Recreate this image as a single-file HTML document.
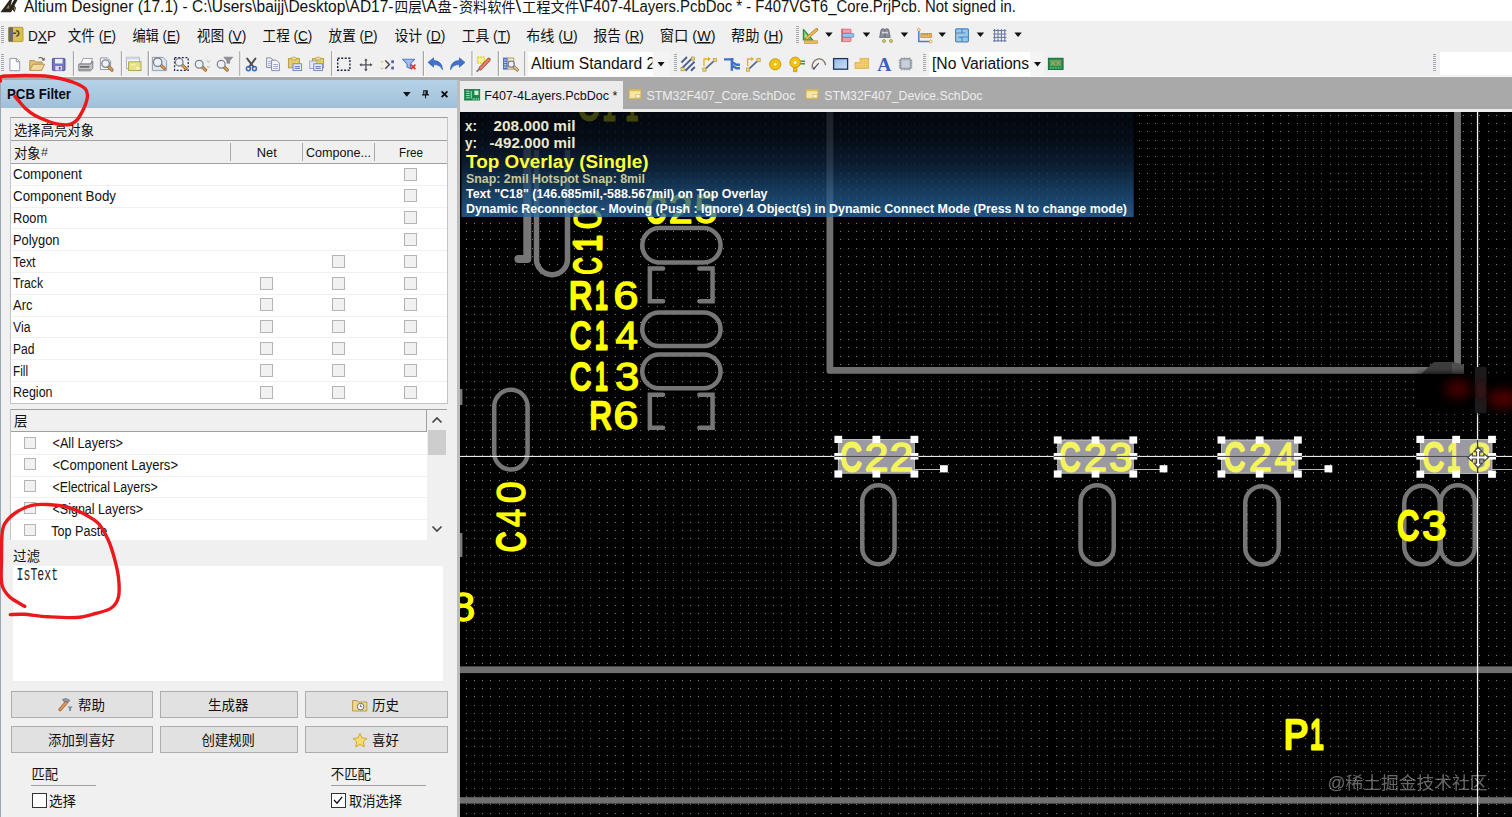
<!DOCTYPE html>
<html lang="zh"><head><meta charset="utf-8"><title>Altium Designer (17.1)</title>
<style>
html,body{margin:0;padding:0;background:#fff;overflow:hidden}
body{width:1512px;height:817px;position:relative;font-family:"Liberation Sans","Noto Sans CJK SC",sans-serif;font-size:14px;color:#000}
.abs{position:absolute}
svg{position:absolute;left:0;top:0;overflow:hidden}
svg text{font-family:"Liberation Sans","Noto Sans CJK SC",sans-serif;white-space:pre}
#titlebar{left:0;top:0;width:1512px;height:21px;background:#fff}
#menubar{left:0;top:21px;width:1512px;height:57px;background:#f0f0f0}
#tabbar{left:0;top:77.4px;width:1512px;height:34.6px;background:#a9a9a9}
#panel{left:0;top:80.3px;width:457px;height:737px;background:#f0f0f0}
#panelhead{left:1px;top:80.3px;width:456.3px;height:27.5px;background:linear-gradient(#b5d2e7,#abc9df 50%,#a1bfd8)}
#pcb{left:460px;top:112px;width:1052px;height:705px;background:#000}
.cb{position:absolute;width:11px;height:11px;border:1px solid #b4b4b4;background:#f1f1f1}
.btn{position:absolute;height:25px;border:1px solid #adadad;background:#e1e1e1}
.rowline{position:absolute;height:1px;background:#f0f0f0}
</style></head><body>

<div id="titlebar" class="abs"></div>
<div id="menubar" class="abs"></div>
<div class="abs" style="left:0;top:76px;width:1512px;height:1.4px;background:#fafafa"></div>
<div id="tabbar" class="abs"></div>
<div class="abs" style="left:460.3px;top:81px;width:162.4px;height:31px;background:#ebebeb"></div>
<div class="abs" style="left:457px;top:108.5px;width:1055px;height:3.5px;background:#ececec"></div>
<div id="panel" class="abs"></div>
<div class="abs" style="left:0;top:80.3px;width:1px;height:737px;background:#9aa6b4"></div>
<div class="abs" style="left:457.3px;top:80.3px;width:2.9px;height:737px;background:#bcbcbc"></div>
<div id="panelhead" class="abs"></div>
<div class="abs" style="left:10px;top:117px;width:436px;height:285px;border:1px solid #c4c4c4;border-top-color:#a0a0a0;background:#fff;box-sizing:content-box"></div>
<div class="abs" style="left:11px;top:118px;width:436px;height:22px;background:#f0f0f0;border-bottom:1px solid #a0a0a0"></div>
<div class="abs" style="left:11px;top:141px;width:436px;height:22px;background:#f0f0f0;border-bottom:1px solid #a0a0a0"></div>
<div class="abs" style="left:230px;top:143px;width:1px;height:18px;background:#a8a8a8"></div>
<div class="abs" style="left:302px;top:143px;width:1px;height:18px;background:#a8a8a8"></div>
<div class="abs" style="left:374px;top:143px;width:1px;height:18px;background:#a8a8a8"></div>
<div class="cb" style="left:404px;top:167.5px"></div>
<div class="rowline" style="left:11px;top:184.8px;width:436px"></div>
<div class="cb" style="left:404px;top:189.3px"></div>
<div class="rowline" style="left:11px;top:206.6px;width:436px"></div>
<div class="cb" style="left:404px;top:211.1px"></div>
<div class="rowline" style="left:11px;top:228.4px;width:436px"></div>
<div class="cb" style="left:404px;top:232.9px"></div>
<div class="rowline" style="left:11px;top:250.2px;width:436px"></div>
<div class="cb" style="left:404px;top:254.7px"></div>
<div class="cb" style="left:332px;top:254.7px"></div>
<div class="rowline" style="left:11px;top:272.0px;width:436px"></div>
<div class="cb" style="left:404px;top:276.5px"></div>
<div class="cb" style="left:332px;top:276.5px"></div>
<div class="cb" style="left:260px;top:276.5px"></div>
<div class="rowline" style="left:11px;top:293.8px;width:436px"></div>
<div class="cb" style="left:404px;top:298.3px"></div>
<div class="cb" style="left:332px;top:298.3px"></div>
<div class="cb" style="left:260px;top:298.3px"></div>
<div class="rowline" style="left:11px;top:315.6px;width:436px"></div>
<div class="cb" style="left:404px;top:320.1px"></div>
<div class="cb" style="left:332px;top:320.1px"></div>
<div class="cb" style="left:260px;top:320.1px"></div>
<div class="rowline" style="left:11px;top:337.4px;width:436px"></div>
<div class="cb" style="left:404px;top:341.9px"></div>
<div class="cb" style="left:332px;top:341.9px"></div>
<div class="cb" style="left:260px;top:341.9px"></div>
<div class="rowline" style="left:11px;top:359.2px;width:436px"></div>
<div class="cb" style="left:404px;top:363.7px"></div>
<div class="cb" style="left:332px;top:363.7px"></div>
<div class="cb" style="left:260px;top:363.7px"></div>
<div class="rowline" style="left:11px;top:381.0px;width:436px"></div>
<div class="cb" style="left:404px;top:385.5px"></div>
<div class="cb" style="left:332px;top:385.5px"></div>
<div class="cb" style="left:260px;top:385.5px"></div>
<div class="abs" style="left:10px;top:409px;width:436px;height:130px;border:1px solid #c4c4c4;border-top-color:#a0a0a0;border-bottom:none;border-right:none;background:#fff"></div>
<div class="abs" style="left:11px;top:410px;width:416px;height:21px;background:#f0f0f0;border-bottom:1px solid #a0a0a0"></div>
<div class="abs" style="left:427px;top:410px;width:20px;height:130px;background:#f0f0f0"></div>
<div class="abs" style="left:426px;top:410px;width:1px;height:22px;background:#a0a0a0"></div>
<div class="abs" style="left:428px;top:430px;width:18px;height:25px;background:#cdcdcd"></div>
<div class="cb" style="left:24px;top:436.5px;width:10px;height:10px"></div>
<div class="rowline" style="left:11px;top:453.8px;width:416px"></div>
<div class="cb" style="left:24px;top:458.3px;width:10px;height:10px"></div>
<div class="rowline" style="left:11px;top:475.6px;width:416px"></div>
<div class="cb" style="left:24px;top:480.1px;width:10px;height:10px"></div>
<div class="rowline" style="left:11px;top:497.4px;width:416px"></div>
<div class="cb" style="left:24px;top:501.9px;width:10px;height:10px"></div>
<div class="rowline" style="left:11px;top:519.2px;width:416px"></div>
<div class="cb" style="left:24px;top:523.7px;width:10px;height:10px"></div>
<div class="abs" style="left:13px;top:566px;width:430px;height:115px;background:#fff"></div>
<div class="btn" style="left:11px;top:691px;width:140px"></div>
<div class="btn" style="left:11px;top:726px;width:140px"></div>
<div class="btn" style="left:160px;top:691px;width:136px"></div>
<div class="btn" style="left:160px;top:726px;width:136px"></div>
<div class="btn" style="left:305px;top:691px;width:141px"></div>
<div class="btn" style="left:305px;top:726px;width:141px"></div>
<div class="abs" style="left:31px;top:785px;width:65px;height:1px;background:#a0a0a0"></div>
<div class="abs" style="left:331px;top:785px;width:95px;height:1px;background:#a0a0a0"></div>
<div class="abs" style="left:32px;top:793px;width:13px;height:13px;border:1px solid #333;background:#fff"></div>
<div class="abs" style="left:331px;top:793px;width:13px;height:13px;border:1px solid #333;background:#fff"></div>
<div class="abs" style="left:528px;top:52px;width:125px;height:24px;background:#fff"></div>
<div class="abs" style="left:653px;top:52px;width:16px;height:24px;background:#f4f4f4"></div>
<div class="abs" style="left:929px;top:52px;width:101px;height:24px;background:#fff"></div>
<div class="abs" style="left:1030px;top:52px;width:14px;height:24px;background:#f4f4f4"></div>
<div class="abs" style="left:1440px;top:52px;width:72px;height:23px;background:#fff"></div>
<div id="pcb" class="abs"></div>
<svg width="1512" height="817" viewBox="0 0 1512 817">
<defs>
<pattern id="vl" x="0" y="0" width="831" height="1" patternUnits="userSpaceOnUse"><rect x="0" y="0" width="1" height="1" fill="#fff"/><rect x="9" y="0" width="1" height="1" fill="#fff"/><rect x="17" y="0" width="1" height="1" fill="#fff"/><rect x="25" y="0" width="1" height="1" fill="#fff"/><rect x="33" y="0" width="1" height="1" fill="#fff"/><rect x="42" y="0" width="1" height="1" fill="#fff"/><rect x="50" y="0" width="1" height="1" fill="#fff"/><rect x="58" y="0" width="1" height="1" fill="#fff"/><rect x="67" y="0" width="1" height="1" fill="#fff"/><rect x="75" y="0" width="1" height="1" fill="#fff"/><rect x="83" y="0" width="1" height="1" fill="#fff"/><rect x="92" y="0" width="1" height="1" fill="#fff"/><rect x="100" y="0" width="1" height="1" fill="#fff"/><rect x="108" y="0" width="1" height="1" fill="#fff"/><rect x="117" y="0" width="1" height="1" fill="#fff"/><rect x="125" y="0" width="1" height="1" fill="#fff"/><rect x="133" y="0" width="1" height="1" fill="#fff"/><rect x="141" y="0" width="1" height="1" fill="#fff"/><rect x="150" y="0" width="1" height="1" fill="#fff"/><rect x="158" y="0" width="1" height="1" fill="#fff"/><rect x="166" y="0" width="1" height="1" fill="#fff"/><rect x="175" y="0" width="1" height="1" fill="#fff"/><rect x="183" y="0" width="1" height="1" fill="#fff"/><rect x="191" y="0" width="1" height="1" fill="#fff"/><rect x="200" y="0" width="1" height="1" fill="#fff"/><rect x="208" y="0" width="1" height="1" fill="#fff"/><rect x="216" y="0" width="1" height="1" fill="#fff"/><rect x="225" y="0" width="1" height="1" fill="#fff"/><rect x="233" y="0" width="1" height="1" fill="#fff"/><rect x="241" y="0" width="1" height="1" fill="#fff"/><rect x="250" y="0" width="1" height="1" fill="#fff"/><rect x="258" y="0" width="1" height="1" fill="#fff"/><rect x="266" y="0" width="1" height="1" fill="#fff"/><rect x="274" y="0" width="1" height="1" fill="#fff"/><rect x="283" y="0" width="1" height="1" fill="#fff"/><rect x="291" y="0" width="1" height="1" fill="#fff"/><rect x="299" y="0" width="1" height="1" fill="#fff"/><rect x="308" y="0" width="1" height="1" fill="#fff"/><rect x="316" y="0" width="1" height="1" fill="#fff"/><rect x="324" y="0" width="1" height="1" fill="#fff"/><rect x="333" y="0" width="1" height="1" fill="#fff"/><rect x="341" y="0" width="1" height="1" fill="#fff"/><rect x="349" y="0" width="1" height="1" fill="#fff"/><rect x="358" y="0" width="1" height="1" fill="#fff"/><rect x="366" y="0" width="1" height="1" fill="#fff"/><rect x="374" y="0" width="1" height="1" fill="#fff"/><rect x="382" y="0" width="1" height="1" fill="#fff"/><rect x="391" y="0" width="1" height="1" fill="#fff"/><rect x="399" y="0" width="1" height="1" fill="#fff"/><rect x="407" y="0" width="1" height="1" fill="#fff"/><rect x="416" y="0" width="1" height="1" fill="#fff"/><rect x="424" y="0" width="1" height="1" fill="#fff"/><rect x="432" y="0" width="1" height="1" fill="#fff"/><rect x="441" y="0" width="1" height="1" fill="#fff"/><rect x="449" y="0" width="1" height="1" fill="#fff"/><rect x="457" y="0" width="1" height="1" fill="#fff"/><rect x="466" y="0" width="1" height="1" fill="#fff"/><rect x="474" y="0" width="1" height="1" fill="#fff"/><rect x="482" y="0" width="1" height="1" fill="#fff"/><rect x="490" y="0" width="1" height="1" fill="#fff"/><rect x="499" y="0" width="1" height="1" fill="#fff"/><rect x="507" y="0" width="1" height="1" fill="#fff"/><rect x="515" y="0" width="1" height="1" fill="#fff"/><rect x="524" y="0" width="1" height="1" fill="#fff"/><rect x="532" y="0" width="1" height="1" fill="#fff"/><rect x="540" y="0" width="1" height="1" fill="#fff"/><rect x="549" y="0" width="1" height="1" fill="#fff"/><rect x="557" y="0" width="1" height="1" fill="#fff"/><rect x="565" y="0" width="1" height="1" fill="#fff"/><rect x="574" y="0" width="1" height="1" fill="#fff"/><rect x="582" y="0" width="1" height="1" fill="#fff"/><rect x="590" y="0" width="1" height="1" fill="#fff"/><rect x="599" y="0" width="1" height="1" fill="#fff"/><rect x="607" y="0" width="1" height="1" fill="#fff"/><rect x="615" y="0" width="1" height="1" fill="#fff"/><rect x="623" y="0" width="1" height="1" fill="#fff"/><rect x="632" y="0" width="1" height="1" fill="#fff"/><rect x="640" y="0" width="1" height="1" fill="#fff"/><rect x="648" y="0" width="1" height="1" fill="#fff"/><rect x="657" y="0" width="1" height="1" fill="#fff"/><rect x="665" y="0" width="1" height="1" fill="#fff"/><rect x="673" y="0" width="1" height="1" fill="#fff"/><rect x="682" y="0" width="1" height="1" fill="#fff"/><rect x="690" y="0" width="1" height="1" fill="#fff"/><rect x="698" y="0" width="1" height="1" fill="#fff"/><rect x="707" y="0" width="1" height="1" fill="#fff"/><rect x="715" y="0" width="1" height="1" fill="#fff"/><rect x="723" y="0" width="1" height="1" fill="#fff"/><rect x="731" y="0" width="1" height="1" fill="#fff"/><rect x="740" y="0" width="1" height="1" fill="#fff"/><rect x="748" y="0" width="1" height="1" fill="#fff"/><rect x="756" y="0" width="1" height="1" fill="#fff"/><rect x="765" y="0" width="1" height="1" fill="#fff"/><rect x="773" y="0" width="1" height="1" fill="#fff"/><rect x="781" y="0" width="1" height="1" fill="#fff"/><rect x="790" y="0" width="1" height="1" fill="#fff"/><rect x="798" y="0" width="1" height="1" fill="#fff"/><rect x="806" y="0" width="1" height="1" fill="#fff"/><rect x="815" y="0" width="1" height="1" fill="#fff"/><rect x="823" y="0" width="1" height="1" fill="#fff"/></pattern>
<pattern id="hl" x="0" y="0" width="1" height="831" patternUnits="userSpaceOnUse"><rect x="0" y="7" width="1" height="1" fill="#7a7a7a"/><rect x="0" y="15" width="1" height="1" fill="#7a7a7a"/><rect x="0" y="23" width="1" height="1" fill="#7a7a7a"/><rect x="0" y="32" width="1" height="1" fill="#7a7a7a"/><rect x="0" y="40" width="1" height="1" fill="#7a7a7a"/><rect x="0" y="48" width="1" height="1" fill="#7a7a7a"/><rect x="0" y="56" width="1" height="1" fill="#7a7a7a"/><rect x="0" y="65" width="1" height="1" fill="#7a7a7a"/><rect x="0" y="73" width="1" height="1" fill="#7a7a7a"/><rect x="0" y="81" width="1" height="1" fill="#7a7a7a"/><rect x="0" y="90" width="1" height="1" fill="#7a7a7a"/><rect x="0" y="98" width="1" height="1" fill="#7a7a7a"/><rect x="0" y="106" width="1" height="1" fill="#7a7a7a"/><rect x="0" y="115" width="1" height="1" fill="#7a7a7a"/><rect x="0" y="123" width="1" height="1" fill="#7a7a7a"/><rect x="0" y="131" width="1" height="1" fill="#7a7a7a"/><rect x="0" y="140" width="1" height="1" fill="#7a7a7a"/><rect x="0" y="148" width="1" height="1" fill="#7a7a7a"/><rect x="0" y="156" width="1" height="1" fill="#7a7a7a"/><rect x="0" y="164" width="1" height="1" fill="#7a7a7a"/><rect x="0" y="173" width="1" height="1" fill="#7a7a7a"/><rect x="0" y="181" width="1" height="1" fill="#7a7a7a"/><rect x="0" y="189" width="1" height="1" fill="#7a7a7a"/><rect x="0" y="198" width="1" height="1" fill="#7a7a7a"/><rect x="0" y="206" width="1" height="1" fill="#7a7a7a"/><rect x="0" y="214" width="1" height="1" fill="#7a7a7a"/><rect x="0" y="223" width="1" height="1" fill="#7a7a7a"/><rect x="0" y="231" width="1" height="1" fill="#7a7a7a"/><rect x="0" y="239" width="1" height="1" fill="#7a7a7a"/><rect x="0" y="248" width="1" height="1" fill="#7a7a7a"/><rect x="0" y="256" width="1" height="1" fill="#7a7a7a"/><rect x="0" y="264" width="1" height="1" fill="#7a7a7a"/><rect x="0" y="273" width="1" height="1" fill="#7a7a7a"/><rect x="0" y="281" width="1" height="1" fill="#7a7a7a"/><rect x="0" y="289" width="1" height="1" fill="#7a7a7a"/><rect x="0" y="297" width="1" height="1" fill="#7a7a7a"/><rect x="0" y="306" width="1" height="1" fill="#7a7a7a"/><rect x="0" y="314" width="1" height="1" fill="#7a7a7a"/><rect x="0" y="322" width="1" height="1" fill="#7a7a7a"/><rect x="0" y="331" width="1" height="1" fill="#7a7a7a"/><rect x="0" y="339" width="1" height="1" fill="#7a7a7a"/><rect x="0" y="347" width="1" height="1" fill="#7a7a7a"/><rect x="0" y="356" width="1" height="1" fill="#7a7a7a"/><rect x="0" y="364" width="1" height="1" fill="#7a7a7a"/><rect x="0" y="372" width="1" height="1" fill="#7a7a7a"/><rect x="0" y="381" width="1" height="1" fill="#7a7a7a"/><rect x="0" y="389" width="1" height="1" fill="#7a7a7a"/><rect x="0" y="397" width="1" height="1" fill="#7a7a7a"/><rect x="0" y="405" width="1" height="1" fill="#7a7a7a"/><rect x="0" y="414" width="1" height="1" fill="#7a7a7a"/><rect x="0" y="422" width="1" height="1" fill="#7a7a7a"/><rect x="0" y="430" width="1" height="1" fill="#7a7a7a"/><rect x="0" y="439" width="1" height="1" fill="#7a7a7a"/><rect x="0" y="447" width="1" height="1" fill="#7a7a7a"/><rect x="0" y="455" width="1" height="1" fill="#7a7a7a"/><rect x="0" y="464" width="1" height="1" fill="#7a7a7a"/><rect x="0" y="472" width="1" height="1" fill="#7a7a7a"/><rect x="0" y="480" width="1" height="1" fill="#7a7a7a"/><rect x="0" y="489" width="1" height="1" fill="#7a7a7a"/><rect x="0" y="497" width="1" height="1" fill="#7a7a7a"/><rect x="0" y="505" width="1" height="1" fill="#7a7a7a"/><rect x="0" y="514" width="1" height="1" fill="#7a7a7a"/><rect x="0" y="522" width="1" height="1" fill="#7a7a7a"/><rect x="0" y="530" width="1" height="1" fill="#7a7a7a"/><rect x="0" y="538" width="1" height="1" fill="#7a7a7a"/><rect x="0" y="547" width="1" height="1" fill="#7a7a7a"/><rect x="0" y="555" width="1" height="1" fill="#7a7a7a"/><rect x="0" y="563" width="1" height="1" fill="#7a7a7a"/><rect x="0" y="572" width="1" height="1" fill="#7a7a7a"/><rect x="0" y="580" width="1" height="1" fill="#7a7a7a"/><rect x="0" y="588" width="1" height="1" fill="#7a7a7a"/><rect x="0" y="597" width="1" height="1" fill="#7a7a7a"/><rect x="0" y="605" width="1" height="1" fill="#7a7a7a"/><rect x="0" y="613" width="1" height="1" fill="#7a7a7a"/><rect x="0" y="622" width="1" height="1" fill="#7a7a7a"/><rect x="0" y="630" width="1" height="1" fill="#7a7a7a"/><rect x="0" y="638" width="1" height="1" fill="#7a7a7a"/><rect x="0" y="646" width="1" height="1" fill="#7a7a7a"/><rect x="0" y="655" width="1" height="1" fill="#7a7a7a"/><rect x="0" y="663" width="1" height="1" fill="#7a7a7a"/><rect x="0" y="671" width="1" height="1" fill="#7a7a7a"/><rect x="0" y="680" width="1" height="1" fill="#7a7a7a"/><rect x="0" y="688" width="1" height="1" fill="#7a7a7a"/><rect x="0" y="696" width="1" height="1" fill="#7a7a7a"/><rect x="0" y="705" width="1" height="1" fill="#7a7a7a"/><rect x="0" y="713" width="1" height="1" fill="#7a7a7a"/><rect x="0" y="721" width="1" height="1" fill="#7a7a7a"/><rect x="0" y="730" width="1" height="1" fill="#7a7a7a"/><rect x="0" y="738" width="1" height="1" fill="#7a7a7a"/><rect x="0" y="746" width="1" height="1" fill="#7a7a7a"/><rect x="0" y="755" width="1" height="1" fill="#7a7a7a"/><rect x="0" y="763" width="1" height="1" fill="#7a7a7a"/><rect x="0" y="771" width="1" height="1" fill="#7a7a7a"/><rect x="0" y="779" width="1" height="1" fill="#7a7a7a"/><rect x="0" y="788" width="1" height="1" fill="#7a7a7a"/><rect x="0" y="796" width="1" height="1" fill="#7a7a7a"/><rect x="0" y="804" width="1" height="1" fill="#7a7a7a"/><rect x="0" y="813" width="1" height="1" fill="#7a7a7a"/><rect x="0" y="821" width="1" height="1" fill="#7a7a7a"/><rect x="0" y="829" width="1" height="1" fill="#7a7a7a"/></pattern>
<mask id="vm" maskUnits="userSpaceOnUse" x="460" y="112" width="1052" height="705"><rect x="460" y="112" width="1052" height="705" fill="url(#vl)"/></mask>
<clipPath id="pcbclip"><rect x="460" y="112" width="1052" height="705"/></clipPath>
<linearGradient id="ovl" x1="0" y1="0" x2="0" y2="1"><stop offset="0" stop-color="#040911" stop-opacity="0.77"/><stop offset="0.25" stop-color="#07101d" stop-opacity="0.77"/><stop offset="0.5" stop-color="#0e253f" stop-opacity="0.77"/><stop offset="0.75" stop-color="#1d4c79" stop-opacity="0.77"/><stop offset="1" stop-color="#2a6ca6" stop-opacity="0.77"/></linearGradient>
<filter id="blur6" x="-100%" y="-100%" width="300%" height="300%"><feGaussianBlur stdDeviation="6"/></filter>
<filter id="blur3" x="-100%" y="-100%" width="300%" height="300%"><feGaussianBlur stdDeviation="3"/></filter>
</defs>
<g clip-path="url(#pcbclip)">
<rect x="460" y="112" width="1052" height="705" fill="url(#hl)" mask="url(#vm)"/>
<path d="M829.9 100 V370.4 H1457.5 V100" fill="none" stroke="#6f6f6f" stroke-width="6.8" stroke-linejoin="round"/>
<rect x="460" y="666.4" width="1052" height="6.7" fill="#6f6f6f"/>
<rect x="460" y="797.2" width="1052" height="6.4" fill="#707070"/>
<rect x="460" y="389" width="2.4" height="16" fill="#7a7a7a"/><rect x="460" y="533" width="2.4" height="24" fill="#7a7a7a"/>
<rect x="642.25" y="228.05" width="78.29999999999995" height="34.5" rx="17.25" ry="17.25" fill="none" stroke="#767676" stroke-width="4.5"/>
<rect x="642.25" y="312.55" width="78.29999999999995" height="33.39999999999998" rx="16.69999999999999" ry="16.69999999999999" fill="none" stroke="#767676" stroke-width="4.5"/>
<rect x="642.25" y="354.55" width="78.29999999999995" height="33.80000000000001" rx="16.900000000000006" ry="16.900000000000006" fill="none" stroke="#767676" stroke-width="4.5"/>
<rect x="494.25" y="389.85" width="33.299999999999955" height="79.69999999999999" rx="16.649999999999977" ry="16.649999999999977" fill="none" stroke="#767676" stroke-width="4.5"/>
<rect x="862.25" y="485.25" width="32.299999999999955" height="79.0" rx="16.149999999999977" ry="16.149999999999977" fill="none" stroke="#767676" stroke-width="4.5"/>
<rect x="1080.55" y="485.25" width="33.200000000000045" height="79.0" rx="16.600000000000023" ry="16.600000000000023" fill="none" stroke="#767676" stroke-width="4.5"/>
<rect x="1245.25" y="486.25" width="33.5" height="78.29999999999995" rx="16.75" ry="16.75" fill="none" stroke="#767676" stroke-width="4.5"/>
<rect x="1404.25" y="485.65" width="35.5" height="78.70000000000005" rx="17.75" ry="17.75" fill="none" stroke="#767676" stroke-width="4.5"/>
<rect x="1440.75" y="485.25" width="34.0" height="79.10000000000002" rx="17.0" ry="17.0" fill="none" stroke="#767676" stroke-width="4.5"/>
<path d="M536.5 150 V259.2 A15.5 15.5 0 0 0 567.5 259.2 V150" fill="none" stroke="#767676" stroke-width="5.5"/>
<path d="M527.3 150 V258.9 H518.4" fill="none" stroke="#767676" stroke-width="8" stroke-linecap="round" stroke-linejoin="round"/>
<path d="M663.1 268.45 H649.85 V301.15 H663.1" fill="none" stroke="#767676" stroke-width="4.5" stroke-linecap="round"/><path d="M699.3 268.45 H712.55 V301.15 H699.3" fill="none" stroke="#767676" stroke-width="4.5" stroke-linecap="round"/>
<path d="M663.1 394.85 H649.85 V427.75 H663.1" fill="none" stroke="#767676" stroke-width="4.5" stroke-linecap="round"/><path d="M699.3 394.85 H712.55 V427.75 H699.3" fill="none" stroke="#767676" stroke-width="4.5" stroke-linecap="round"/>
<text y="120.4" font-size="39.7" fill="#ffff00" stroke="#ffff00" stroke-width="2.2" stroke-linejoin="round" ><tspan x="578.1" textLength="20.9" lengthAdjust="spacingAndGlyphs" stroke-width="2.7">C</tspan><tspan x="602.7" textLength="12.9" lengthAdjust="spacingAndGlyphs" stroke-width="3.0">1</tspan><tspan x="625.8" textLength="12.3" lengthAdjust="spacingAndGlyphs" stroke-width="3.0">1</tspan></text>
<text y="222.6" font-size="40.4" fill="#ffff00" stroke="#ffff00" stroke-width="2.2" stroke-linejoin="round" ><tspan x="645.4" textLength="20.7" lengthAdjust="spacingAndGlyphs" stroke-width="2.7">C</tspan><tspan x="668.5" textLength="24.3" lengthAdjust="spacingAndGlyphs" stroke-width="1.3">2</tspan><tspan x="694.5" textLength="22.9" lengthAdjust="spacingAndGlyphs" stroke-width="1.3">5</tspan></text>
<text y="308.9" font-size="39.7" fill="#ffff00" stroke="#ffff00" stroke-width="2.2" stroke-linejoin="round" ><tspan x="569.1" textLength="23.2" lengthAdjust="spacingAndGlyphs" stroke-width="2.7">R</tspan><tspan x="595.1" textLength="12.8" lengthAdjust="spacingAndGlyphs" stroke-width="3.0">1</tspan><tspan x="613.3" textLength="25.3" lengthAdjust="spacingAndGlyphs" stroke-width="1.3">6</tspan></text>
<text y="348.9" font-size="39.4" fill="#ffff00" stroke="#ffff00" stroke-width="2.2" stroke-linejoin="round" ><tspan x="569.9" textLength="21.1" lengthAdjust="spacingAndGlyphs" stroke-width="2.7">C</tspan><tspan x="595.1" textLength="12.8" lengthAdjust="spacingAndGlyphs" stroke-width="3.0">1</tspan><tspan x="615.4" textLength="22.4" lengthAdjust="spacingAndGlyphs" stroke-width="1.3">4</tspan></text>
<text y="389.5" font-size="39.4" fill="#ffff00" stroke="#ffff00" stroke-width="2.2" stroke-linejoin="round" ><tspan x="569.9" textLength="21.1" lengthAdjust="spacingAndGlyphs" stroke-width="2.7">C</tspan><tspan x="595.1" textLength="12.8" lengthAdjust="spacingAndGlyphs" stroke-width="3.0">1</tspan><tspan x="615.0" textLength="24.3" lengthAdjust="spacingAndGlyphs" stroke-width="1.3">3</tspan></text>
<text y="429.4" font-size="39.7" fill="#ffff00" stroke="#ffff00" stroke-width="2.2" stroke-linejoin="round" ><tspan x="589.6" textLength="22.5" lengthAdjust="spacingAndGlyphs" stroke-width="2.7">R</tspan><tspan x="613.3" textLength="25.3" lengthAdjust="spacingAndGlyphs" stroke-width="1.3">6</tspan></text>
<text y="-1.1" font-size="39.1" fill="#ffff00" stroke="#ffff00" stroke-width="2.2" stroke-linejoin="round" transform="translate(601.8 274.7) rotate(-90)"><tspan x="0.1" textLength="17.1" lengthAdjust="spacingAndGlyphs" stroke-width="2.7">C</tspan><tspan x="23.0" textLength="16.6" lengthAdjust="spacingAndGlyphs" stroke-width="3.0">1</tspan><tspan x="45.5" textLength="21.2" lengthAdjust="spacingAndGlyphs" stroke-width="1.3">0</tspan></text>
<text y="-1.1" font-size="41.1" fill="#ffff00" stroke="#ffff00" stroke-width="2.2" stroke-linejoin="round" transform="translate(525.7 551.9) rotate(-90)"><tspan x="-0.1" textLength="20.3" lengthAdjust="spacingAndGlyphs" stroke-width="2.7">C</tspan><tspan x="25.0" textLength="18.2" lengthAdjust="spacingAndGlyphs" stroke-width="1.3">4</tspan><tspan x="48.7" textLength="21.8" lengthAdjust="spacingAndGlyphs" stroke-width="1.3">0</tspan></text>
<text y="539.7" font-size="41.7" fill="#ffff00" stroke="#ffff00" stroke-width="2.6" stroke-linejoin="round" ><tspan x="1397.2" textLength="21.7" lengthAdjust="spacingAndGlyphs" stroke-width="3.1">C</tspan><tspan x="1422.0" textLength="24.6" lengthAdjust="spacingAndGlyphs" stroke-width="1.7">3</tspan></text>
<text y="749.0" font-size="41.6" fill="#ffff00" stroke="#ffff00" stroke-width="2.2" stroke-linejoin="round" ><tspan x="1283.7" textLength="24.6" lengthAdjust="spacingAndGlyphs" stroke-width="2.7">P</tspan><tspan x="1309.9" textLength="13.8" lengthAdjust="spacingAndGlyphs" stroke-width="3.0">1</tspan></text>
<text y="620.5" font-size="41.3" fill="#ffff00" stroke="#ffff00" stroke-width="2.2" stroke-linejoin="round" ><tspan x="451.3" textLength="23.9" lengthAdjust="spacingAndGlyphs" stroke-width="1.3">8</tspan></text>
<rect x="838.3" y="439.4" width="76.10000000000002" height="33.80000000000001" fill="#9b99a2" stroke="#d4d4d4" stroke-width="0.8"/><text y="470.9" font-size="40.6" fill="#f3f35e" stroke="#f3f35e" stroke-width="2.4" stroke-linejoin="round" ><tspan x="840.5" textLength="21.2" lengthAdjust="spacingAndGlyphs" stroke-width="2.9">C</tspan><tspan x="864.4" textLength="24.0" lengthAdjust="spacingAndGlyphs" stroke-width="1.5">2</tspan><tspan x="889.4" textLength="23.8" lengthAdjust="spacingAndGlyphs" stroke-width="1.5">2</tspan></text>
<rect x="1057.7" y="440" width="75.59999999999991" height="33.19999999999999" fill="#9b99a2" stroke="#d4d4d4" stroke-width="0.8"/><text y="470.9" font-size="40.6" fill="#f3f35e" stroke="#f3f35e" stroke-width="2.4" stroke-linejoin="round" ><tspan x="1059.6" textLength="20.8" lengthAdjust="spacingAndGlyphs" stroke-width="2.9">C</tspan><tspan x="1083.7" textLength="23.3" lengthAdjust="spacingAndGlyphs" stroke-width="1.5">2</tspan><tspan x="1109.0" textLength="23.5" lengthAdjust="spacingAndGlyphs" stroke-width="1.5">3</tspan></text>
<rect x="1221.4" y="440" width="76.5" height="33.19999999999999" fill="#9b99a2" stroke="#d4d4d4" stroke-width="0.8"/><text y="470.9" font-size="40.6" fill="#f3f35e" stroke="#f3f35e" stroke-width="2.4" stroke-linejoin="round" ><tspan x="1224.2" textLength="20.8" lengthAdjust="spacingAndGlyphs" stroke-width="2.9">C</tspan><tspan x="1248.7" textLength="23.3" lengthAdjust="spacingAndGlyphs" stroke-width="1.5">2</tspan><tspan x="1274.4" textLength="20.6" lengthAdjust="spacingAndGlyphs" stroke-width="1.5">4</tspan></text>
<rect x="1420.3" y="439.4" width="71.70000000000005" height="34.0" fill="#9b99a2" stroke="#d4d4d4" stroke-width="0.8"/><text y="470.9" font-size="40.6" fill="#f3f35e" stroke="#f3f35e" stroke-width="2.4" stroke-linejoin="round" ><tspan x="1422.8" textLength="21.2" lengthAdjust="spacingAndGlyphs" stroke-width="2.9">C</tspan><tspan x="1447.1" textLength="13.2" lengthAdjust="spacingAndGlyphs" stroke-width="3.2">1</tspan><tspan x="1467.8" textLength="23.2" lengthAdjust="spacingAndGlyphs" stroke-width="1.5">8</tspan></text>
<rect x="460" y="455.9" width="1052" height="1.1" fill="#e8e8e8"/>
<rect x="1476.9" y="112" width="1.3" height="705" fill="#f2f2f2"/>
<rect x="834.3" y="453" width="8" height="6.6" fill="#fff"/><rect x="910.4" y="453" width="8" height="6.6" fill="#fff"/>
<rect x="834.3" y="455.9" width="84.10000000000002" height="1.1" fill="#4a4a4a"/>
<rect x="834.4" y="435.79999999999995" width="7.8" height="7.2" fill="#fff"/><rect x="872.4499999999999" y="435.79999999999995" width="7.8" height="7.2" fill="#fff"/><rect x="910.5" y="435.79999999999995" width="7.8" height="7.2" fill="#fff"/><rect x="834.4" y="470.4" width="7.8" height="7.2" fill="#fff"/><rect x="872.4499999999999" y="470.4" width="7.8" height="7.2" fill="#fff"/><rect x="910.5" y="470.4" width="7.8" height="7.2" fill="#fff"/>
<rect x="914.4" y="469" width="29.5" height="1" fill="#bcbcbc"/><rect x="940.0" y="465.2" width="7.8" height="7.2" fill="#fff"/>
<rect x="1053.7" y="453" width="8" height="6.6" fill="#fff"/><rect x="1129.3" y="453" width="8" height="6.6" fill="#fff"/>
<rect x="1053.7" y="455.9" width="83.59999999999991" height="1.1" fill="#4a4a4a"/>
<rect x="1053.8" y="436.4" width="7.8" height="7.2" fill="#fff"/><rect x="1091.6" y="436.4" width="7.8" height="7.2" fill="#fff"/><rect x="1129.3999999999999" y="436.4" width="7.8" height="7.2" fill="#fff"/><rect x="1053.8" y="470.4" width="7.8" height="7.2" fill="#fff"/><rect x="1091.6" y="470.4" width="7.8" height="7.2" fill="#fff"/><rect x="1129.3999999999999" y="470.4" width="7.8" height="7.2" fill="#fff"/>
<rect x="1133.3" y="469" width="30.200000000000045" height="1" fill="#bcbcbc"/><rect x="1159.6" y="465.2" width="7.8" height="7.2" fill="#fff"/>
<rect x="1217.4" y="453" width="8" height="6.6" fill="#fff"/><rect x="1293.9" y="453" width="8" height="6.6" fill="#fff"/>
<rect x="1217.4" y="455.9" width="84.5" height="1.1" fill="#4a4a4a"/>
<rect x="1217.5" y="436.4" width="7.8" height="7.2" fill="#fff"/><rect x="1255.75" y="436.4" width="7.8" height="7.2" fill="#fff"/><rect x="1294.0" y="436.4" width="7.8" height="7.2" fill="#fff"/><rect x="1217.5" y="470.4" width="7.8" height="7.2" fill="#fff"/><rect x="1255.75" y="470.4" width="7.8" height="7.2" fill="#fff"/><rect x="1294.0" y="470.4" width="7.8" height="7.2" fill="#fff"/>
<rect x="1297.9" y="469" width="30.5" height="1" fill="#bcbcbc"/><rect x="1324.5" y="465.2" width="7.8" height="7.2" fill="#fff"/>
<rect x="1416.3" y="453" width="8" height="6.6" fill="#fff"/><rect x="1488" y="453" width="8" height="6.6" fill="#fff"/>
<rect x="1416.3" y="455.9" width="79.70000000000005" height="1.1" fill="#4a4a4a"/>
<rect x="1416.3999999999999" y="435.79999999999995" width="7.8" height="7.2" fill="#fff"/><rect x="1452.25" y="435.79999999999995" width="7.8" height="7.2" fill="#fff"/><rect x="1488.1" y="435.79999999999995" width="7.8" height="7.2" fill="#fff"/><rect x="1416.3999999999999" y="470.59999999999997" width="7.8" height="7.2" fill="#fff"/><rect x="1452.25" y="470.59999999999997" width="7.8" height="7.2" fill="#fff"/><rect x="1488.1" y="470.59999999999997" width="7.8" height="7.2" fill="#fff"/>
<rect x="1492" y="469" width="30" height="1" fill="#b0b0b0"/>
<rect x="1476.9" y="440" width="1.3" height="33" fill="#3c3c3c"/>
<path d="M1421 374 L1434 362 H1452 L1464 365 V374 Z" fill="#3c3c3c"/>
<path d="M1452 362 L1464 365 V374 H1452 Z" fill="#4e4e4e"/>
<path d="M1418 374 H1512 V412 H1440 Q1420 400 1418 374 Z" fill="#000" filter="url(#blur3)"/>
<rect x="1418" y="374" width="94" height="34" fill="#000"/>
<ellipse cx="1458" cy="389" rx="13" ry="9" fill="#480000" filter="url(#blur6)"/>
<ellipse cx="1503" cy="399" rx="16" ry="9" fill="#520000" filter="url(#blur6)"/>
<rect x="1475" y="367" width="11.5" height="46" fill="#1c1a1a"/>
<ellipse cx="1481" cy="390" rx="4" ry="10" fill="#3a0a10" filter="url(#blur3)"/>
<g transform="translate(1478.1 457.5) scale(1.15)"><path d="M0 -9 L3.5 -5 H1.3 V-1.3 H5 V-3.5 L9 0 L5 3.5 V1.3 H1.3 V5 H3.5 L0 9 L-3.5 5 H-1.3 V1.3 H-5 V3.5 L-9 0 L-5 -3.5 V-1.3 H-1.3 V-5 H-3.5 Z" fill="#fff" stroke="#444" stroke-width="1"/></g>
<rect x="461.5" y="112" width="672.2" height="105" fill="url(#ovl)"/>
<text x="465" y="130.5" font-size="14.5" fill="#e9e9cf" textLength="12" lengthAdjust="spacingAndGlyphs" font-weight="bold" >x:</text>
<text x="493.5" y="130.5" font-size="14.5" fill="#e9e9cf" textLength="82" lengthAdjust="spacingAndGlyphs" font-weight="bold" >208.000 mil</text>
<text x="465" y="147.8" font-size="14.5" fill="#e9e9cf" textLength="12" lengthAdjust="spacingAndGlyphs" font-weight="bold" >y:</text>
<text x="489.5" y="147.8" font-size="14.5" fill="#e9e9cf" textLength="86" lengthAdjust="spacingAndGlyphs" font-weight="bold" >-492.000 mil</text>
<text x="466" y="168.3" font-size="18" fill="#ffff3c" textLength="182.5" lengthAdjust="spacingAndGlyphs" font-weight="bold" >Top Overlay (Single)</text>
<text x="466" y="183.3" font-size="12" fill="#c9c99a" textLength="179" lengthAdjust="spacingAndGlyphs" font-weight="bold" >Snap: 2mil Hotspot Snap: 8mil</text>
<text x="466" y="198" font-size="12.5" fill="#fff" textLength="301.5" lengthAdjust="spacingAndGlyphs" font-weight="bold" >Text "C18" (146.685mil,-588.567mil) on Top Overlay</text>
<text x="466" y="212.6" font-size="12.5" fill="#fff" textLength="661" lengthAdjust="spacingAndGlyphs" font-weight="bold" >Dynamic Reconnector - Moving (Push : Ignore) 4 Object(s) in Dynamic Connect Mode (Press N to change mode)</text>
<text x="1327.5" y="788.6" font-size="17.5" fill="#fff" textLength="160" lengthAdjust="spacingAndGlyphs" opacity="0.4">@稀土掘金技术社区</text>
</g>
</svg>
<svg width="1512" height="817" viewBox="0 0 1512 817">
<path d="M0.5 12.3 L9.5 0 H12 L10.5 6 L14 0 H17.5 L14.5 5.5 L16 8 L14.5 12.3 L12.5 9.5 L11 12.3 Z" fill="#2a241a"/>
<path d="M6 8.5 L9 4.5 L9.5 8.5 Z M13.5 6.5 l2 1.5 l-1 3z" fill="#8a7a58"/>
<rect x="1" y="26" width="3" height="1" fill="#a4a8b0"/><rect x="1" y="28" width="3" height="1" fill="#a4a8b0"/><rect x="1" y="30" width="3" height="1" fill="#a4a8b0"/><rect x="1" y="32" width="3" height="1" fill="#a4a8b0"/><rect x="1" y="34" width="3" height="1" fill="#a4a8b0"/><rect x="1" y="36" width="3" height="1" fill="#a4a8b0"/><rect x="1" y="38" width="3" height="1" fill="#a4a8b0"/><rect x="1" y="40" width="3" height="1" fill="#a4a8b0"/><rect x="1" y="42" width="3" height="1" fill="#a4a8b0"/>
<rect x="1" y="54" width="3" height="1" fill="#a4a8b0"/><rect x="1" y="56" width="3" height="1" fill="#a4a8b0"/><rect x="1" y="58" width="3" height="1" fill="#a4a8b0"/><rect x="1" y="60" width="3" height="1" fill="#a4a8b0"/><rect x="1" y="62" width="3" height="1" fill="#a4a8b0"/><rect x="1" y="64" width="3" height="1" fill="#a4a8b0"/><rect x="1" y="66" width="3" height="1" fill="#a4a8b0"/><rect x="1" y="68" width="3" height="1" fill="#a4a8b0"/><rect x="1" y="70" width="3" height="1" fill="#a4a8b0"/>
<rect x="796" y="26" width="3" height="1" fill="#a4a8b0"/><rect x="796" y="28" width="3" height="1" fill="#a4a8b0"/><rect x="796" y="30" width="3" height="1" fill="#a4a8b0"/><rect x="796" y="32" width="3" height="1" fill="#a4a8b0"/><rect x="796" y="34" width="3" height="1" fill="#a4a8b0"/><rect x="796" y="36" width="3" height="1" fill="#a4a8b0"/><rect x="796" y="38" width="3" height="1" fill="#a4a8b0"/><rect x="796" y="40" width="3" height="1" fill="#a4a8b0"/><rect x="796" y="42" width="3" height="1" fill="#a4a8b0"/>
<rect x="674" y="54" width="3" height="1" fill="#a4a8b0"/><rect x="674" y="56" width="3" height="1" fill="#a4a8b0"/><rect x="674" y="58" width="3" height="1" fill="#a4a8b0"/><rect x="674" y="60" width="3" height="1" fill="#a4a8b0"/><rect x="674" y="62" width="3" height="1" fill="#a4a8b0"/><rect x="674" y="64" width="3" height="1" fill="#a4a8b0"/><rect x="674" y="66" width="3" height="1" fill="#a4a8b0"/><rect x="674" y="68" width="3" height="1" fill="#a4a8b0"/><rect x="674" y="70" width="3" height="1" fill="#a4a8b0"/>
<rect x="923" y="54" width="3" height="1" fill="#a4a8b0"/><rect x="923" y="56" width="3" height="1" fill="#a4a8b0"/><rect x="923" y="58" width="3" height="1" fill="#a4a8b0"/><rect x="923" y="60" width="3" height="1" fill="#a4a8b0"/><rect x="923" y="62" width="3" height="1" fill="#a4a8b0"/><rect x="923" y="64" width="3" height="1" fill="#a4a8b0"/><rect x="923" y="66" width="3" height="1" fill="#a4a8b0"/><rect x="923" y="68" width="3" height="1" fill="#a4a8b0"/><rect x="923" y="70" width="3" height="1" fill="#a4a8b0"/>
<rect x="1433" y="54" width="3" height="1" fill="#a4a8b0"/><rect x="1433" y="56" width="3" height="1" fill="#a4a8b0"/><rect x="1433" y="58" width="3" height="1" fill="#a4a8b0"/><rect x="1433" y="60" width="3" height="1" fill="#a4a8b0"/><rect x="1433" y="62" width="3" height="1" fill="#a4a8b0"/><rect x="1433" y="64" width="3" height="1" fill="#a4a8b0"/><rect x="1433" y="66" width="3" height="1" fill="#a4a8b0"/><rect x="1433" y="68" width="3" height="1" fill="#a4a8b0"/><rect x="1433" y="70" width="3" height="1" fill="#a4a8b0"/>
<rect x="8.6" y="27.3" width="14.4" height="14.3" rx="1" fill="#dcc04a" stroke="#a89030" stroke-width="0.8"/>
<rect x="8.6" y="27.3" width="4.4" height="14.3" fill="#6a6a6a"/>
<path d="M13 33.2 h3.2 M16.2 30.8 a2.6 2.6 0 0 1 0 5.2" fill="none" stroke="#4a4a40" stroke-width="1.6"/>
<rect x="72.9" y="51.2" width="1.3" height="24.6" fill="#a6a6a6"/><rect x="74.2" y="51.2" width="1" height="24.6" fill="#fbfbfb"/>
<rect x="120.9" y="51.2" width="1.3" height="24.6" fill="#a6a6a6"/><rect x="122.2" y="51.2" width="1" height="24.6" fill="#fbfbfb"/>
<rect x="147.70000000000002" y="51.2" width="1.3" height="24.6" fill="#a6a6a6"/><rect x="149.0" y="51.2" width="1" height="24.6" fill="#fbfbfb"/>
<rect x="239.20000000000002" y="51.2" width="1.3" height="24.6" fill="#a6a6a6"/><rect x="240.5" y="51.2" width="1" height="24.6" fill="#fbfbfb"/>
<rect x="331.0" y="51.2" width="1.3" height="24.6" fill="#a6a6a6"/><rect x="332.3" y="51.2" width="1" height="24.6" fill="#fbfbfb"/>
<rect x="422.79999999999995" y="51.2" width="1.3" height="24.6" fill="#a6a6a6"/><rect x="424.09999999999997" y="51.2" width="1" height="24.6" fill="#fbfbfb"/>
<rect x="471.4" y="51.2" width="1.3" height="24.6" fill="#a6a6a6"/><rect x="472.7" y="51.2" width="1" height="24.6" fill="#fbfbfb"/>
<rect x="497.79999999999995" y="51.2" width="1.3" height="24.6" fill="#a6a6a6"/><rect x="499.09999999999997" y="51.2" width="1" height="24.6" fill="#fbfbfb"/>
<rect x="524.1" y="51.2" width="1.3" height="24.6" fill="#a6a6a6"/><rect x="525.4000000000001" y="51.2" width="1" height="24.6" fill="#fbfbfb"/>
<path d="M9.9 58.4 h6.4 l3.4 3.4 v8.9 h-9.8z" fill="#fcfcfd" stroke="#8a90a0" stroke-width="0.9"/><path d="M16.3 58.4 v3.4 h3.4" fill="none" stroke="#8a90a0" stroke-width="0.9"/>
<path d="M29.8 70.3 V60.6 h4.5 l1.2 1.4 h6.5 v2.2" fill="#e6c27a" stroke="#b08a40" stroke-width="0.9"/>
<path d="M29.8 70.4 L33 64.2 h11.6 L41.6 70.4 Z" fill="#f3d9a0" stroke="#b08a40" stroke-width="0.9"/>
<path d="M38.5 58 q3.2 -1.6 5 1.6" fill="none" stroke="#6a5a40" stroke-width="1.1"/><path d="M44.6 57.6 v3 h-3z" fill="#5a4a38"/>
<rect x="52.4" y="58.4" width="12.6" height="12.2" rx="0.8" fill="#7674c2" stroke="#4c4a94" stroke-width="0.9"/>
<rect x="55" y="58.9" width="7.6" height="4.6" fill="#eceef8"/><rect x="55.4" y="66" width="6.6" height="4.4" fill="#dcdcf0"/><rect x="58.8" y="66.8" width="1.8" height="2.8" fill="#5a58a4"/>
<path d="M80.5 64 L83.5 58.4 h9 L90.5 64z" fill="#fafafa" stroke="#8a8a92" stroke-width="0.8"/>
<path d="M78.8 64 h11.8 l2.2 -3 v7 l-2.2 2.8 h-11.8z" fill="#c4c4c8" stroke="#74747c" stroke-width="0.9"/><rect x="80" y="66.2" width="9.4" height="1.4" fill="#55555c"/><rect x="79" y="69" width="11.4" height="1.4" fill="#9a9aa0"/>
<path d="M100.4 57.9 h7 l3.2 3.2 v8.4 h-10.2z" fill="#f4f6fa" stroke="#8a90a0" stroke-width="0.9"/>
<line x1="108.3" y1="66.3" x2="112" y2="70" stroke="#8a6030" stroke-width="3.2" stroke-linecap="round"/><line x1="109.0" y1="67.0" x2="112" y2="70" stroke="#e09a48" stroke-width="1.8" stroke-linecap="round"/><circle cx="105.6" cy="63.6" r="3.8" fill="#eef2f8" stroke="#7c828c" stroke-width="1.3"/>
<rect x="126.5" y="57.3" width="13" height="11.2" fill="#f6f8fc" stroke="#a4acc4" stroke-width="0.9"/><rect x="126.5" y="57.3" width="13" height="2.2" fill="#cfd6e8"/>
<rect x="128.6" y="61.8" width="12.4" height="8.8" fill="#e9e07e" stroke="#a4a050" stroke-width="0.9"/><rect x="136" y="67" width="3.6" height="2.4" fill="#f8f4c0"/><rect x="130.5" y="63.6" width="5" height="2" fill="#f4eeb0"/>
<path d="M152.4 57.4 h10.8 l3.4 3.4 v9.8 h-14.2z" fill="#dbe6f2" stroke="#8896aa" stroke-width="0.9"/>
<line x1="160.8" y1="65.1" x2="164.4" y2="68.4" stroke="#8a6030" stroke-width="3.2" stroke-linecap="round"/><line x1="161.5" y1="65.7" x2="164.4" y2="68.4" stroke="#e09a48" stroke-width="1.8" stroke-linecap="round"/><circle cx="157.7" cy="62.2" r="4.2" fill="#eef2f8" stroke="#7c828c" stroke-width="1.3"/>
<rect x="174.6" y="57.6" width="13.6" height="12.8" fill="#f4f6fa" stroke="#1e2a5a" stroke-width="1.3" stroke-dasharray="2 1.6"/>
<line x1="182.0" y1="64.8" x2="186" y2="68.6" stroke="#8a6030" stroke-width="3.2" stroke-linecap="round"/><line x1="182.7" y1="65.5" x2="186" y2="68.6" stroke="#e09a48" stroke-width="1.8" stroke-linecap="round"/><circle cx="179.2" cy="62.2" r="3.8" fill="#eef2f8" stroke="#7c828c" stroke-width="1.3"/>
<line x1="202.1" y1="66.9" x2="205.6" y2="70" stroke="#8a6030" stroke-width="3.2" stroke-linecap="round"/><line x1="202.9" y1="67.6" x2="205.6" y2="70" stroke="#e09a48" stroke-width="1.8" stroke-linecap="round"/><circle cx="199.2" cy="64.3" r="3.9" fill="#eef2f8" stroke="#7c828c" stroke-width="1.3"/>
<path d="M206.8 60.6 l1.7 1.6 l1.7 -1.6 M206.8 66 l1.7 1.6 l1.7 -1.6" fill="none" stroke="#a4b4a0" stroke-width="1"/>
<line x1="224.0" y1="67.0" x2="227.3" y2="70" stroke="#8a6030" stroke-width="3.2" stroke-linecap="round"/><line x1="224.8" y1="67.6" x2="227.3" y2="70" stroke="#e09a48" stroke-width="1.8" stroke-linecap="round"/><circle cx="221.2" cy="64.3" r="3.9" fill="#eef2f8" stroke="#7c828c" stroke-width="1.3"/>
<path d="M223.8 57.2 h9 l-3.2 3.6 v2.4 h-2.6 v-2.4z" fill="#8e9098" stroke="#70727a" stroke-width="0.6"/>
<path d="M247.2 58.6 L253.6 67 M255.4 58.6 L249 67" stroke="#4c4c50" stroke-width="1.9" stroke-linecap="round"/>
<ellipse cx="248.4" cy="68.6" rx="2" ry="2.2" fill="none" stroke="#3868c0" stroke-width="1.5"/><ellipse cx="254.4" cy="68.6" rx="2" ry="2.2" fill="none" stroke="#3868c0" stroke-width="1.5"/>
<path d="M266.6 57.9 h4.4 l2.6 2.6 v7 h-7z" fill="#eef0f8" stroke="#7886ac" stroke-width="0.9"/><path d="M268 61.5 h3.6 M268 63.5 h3.6 M268 65.5 h3.6" stroke="#9aa4c0" stroke-width="0.8"/>
<path d="M271.6 60.2 h4.8 l3 3 v7.4 h-7.8z" fill="#f8f9fc" stroke="#7886ac" stroke-width="0.9"/><path d="M273.2 64.5 h4.8 M273.2 66.5 h4.8 M273.2 68.5 h4.8" stroke="#8a94b4" stroke-width="0.8"/>
<rect x="288.4" y="58.6" width="11" height="9.2" fill="#e8cc6a" stroke="#b09838" stroke-width="0.9"/><rect x="291.4" y="57.3" width="5" height="2.6" rx="1" fill="#f0e0a0" stroke="#b09838" stroke-width="0.7"/>
<rect x="293" y="63.8" width="8.6" height="6.8" fill="#e8eefa" stroke="#6880b8" stroke-width="0.9"/><path d="M294.6 66.6 h5.4 M294.6 68.4 h5.4" stroke="#5068a8" stroke-width="0.9"/>
<rect x="312.6" y="58.6" width="11" height="9.2" fill="#e8cc6a" stroke="#b09838" stroke-width="0.9"/><rect x="315.6" y="57.3" width="5" height="2.6" rx="1" fill="#f0e0a0" stroke="#b09838" stroke-width="0.7"/>
<rect x="309.8" y="61" width="7" height="7.6" fill="#e4e8f2" stroke="#8c98b8" stroke-width="0.8"/>
<rect x="313.8" y="63.8" width="8.6" height="6.8" fill="#e8eefa" stroke="#6880b8" stroke-width="0.9"/><path d="M315.4 66.6 h5.4 M315.4 68.4 h5.4" stroke="#5068a8" stroke-width="0.9"/>
<rect x="337.7" y="58.2" width="12.2" height="12" fill="none" stroke="#1c2444" stroke-width="1.4" stroke-dasharray="2 1.5"/>
<path d="M365.9 59.2 V70.4 M360.2 64.8 H371.6" stroke="#4e5258" stroke-width="1.3"/><path d="M365.9 58.4 l1.8 2.2 h-3.6z M365.9 71.2 l1.8 -2.2 h-3.6z M359.4 64.8 l2.2 -1.8 v3.6z M372.4 64.8 l-2.2 -1.8 v3.6z" fill="#4e5258"/>
<path d="M385.3 60.4 L389.4 64.6 L385.3 68.8" fill="none" stroke="#4a4a4e" stroke-width="1.5"/>
<path d="M380.4 61 l1.5 1.5 l1.5 -1.5 M380.4 67.6 l1.5 1.5 l1.5 -1.5" fill="none" stroke="#c8c850" stroke-width="1"/>
<rect x="391.2" y="60.2" width="2.8" height="3" rx="0.6" fill="#5462b0"/><rect x="391.2" y="66.4" width="2.8" height="3" rx="0.6" fill="#5462b0"/>
<path d="M402.6 59.2 h12 l-4.2 4.8 v4.6 l-3.4 -1.6 v-3z" fill="#a8bcea" stroke="#4e7cd0" stroke-width="1.1" stroke-linejoin="round"/>
<path d="M410.8 64.6 l4.6 4.6 M415.4 64.6 l-4.6 4.6" stroke="#e03030" stroke-width="1.7"/>
<path d="M428 62.4 L433.6 57.8 V60.6 C439 60.6 442.6 64 442.4 69.8 C441 66.2 438 64.6 433.6 64.6 V67.2 Z" fill="#3f72cc" stroke="#2a54a8" stroke-width="0.6"/>
<path d="M465 62.4 L459.4 57.8 V60.6 C454 60.6 450.4 64 450.6 69.8 C452 66.2 455 64.6 459.4 64.6 V67.2 Z" fill="#3f72cc" stroke="#2a54a8" stroke-width="0.6"/>
<rect x="477.6" y="57" width="6.8" height="6" fill="#f4f0a0" stroke="#e0d020" stroke-width="1.3" stroke-dasharray="1.6 1"/>
<path d="M488.8 59.6 L480.4 68.4" stroke="#a05840" stroke-width="3.8" stroke-linecap="round"/><path d="M488.6 59.8 L480.6 68.2" stroke="#ee7c68" stroke-width="2.2" stroke-linecap="round"/><path d="M479.6 69 L476.6 71.6" stroke="#6a6a6a" stroke-width="1.4"/>
<rect x="503" y="57.6" width="4.8" height="12" fill="#4a72ba"/><path d="M504 60 h2.6 M504 62.4 h2.6 M504 64.8 h2.6 M504 67.2 h2.6" stroke="#dfe8f8" stroke-width="0.9"/>
<rect x="507.8" y="58" width="6" height="11.2" fill="#f0ead0" stroke="#b89c58" stroke-width="1"/>
<line x1="513.5" y1="66.3" x2="517.2" y2="69.8" stroke="#8a6030" stroke-width="3.2" stroke-linecap="round"/><line x1="514.2" y1="67.0" x2="517.2" y2="69.8" stroke="#dcc690" stroke-width="1.8" stroke-linecap="round"/><circle cx="511.2" cy="64.2" r="3.1" fill="#eef2f8" stroke="#7c828c" stroke-width="1.3"/>
<path d="M681.4 62.6 L687 57 M681.6 68.6 L693 57.4 M685.4 70.8 L694.6 61.6 M691 70.8 L694.8 67" stroke="#4e5e8c" stroke-width="2"/>
<rect x="691.4" y="57" width="3.2" height="3.2" fill="#e8d878" stroke="#a8984a" stroke-width="0.7"/><rect x="681" y="67.6" width="3.2" height="3.2" fill="#e8d878" stroke="#a8984a" stroke-width="0.7"/>
<path d="M704.6 69.6 L714.8 60.2" stroke="#5c6c8c" stroke-width="1.8"/><rect x="702.8" y="68" width="3.2" height="3.2" fill="#ecd880" stroke="#b0963a" stroke-width="0.7"/><rect x="713.4" y="58.6" width="3.2" height="3.2" fill="#ecd880" stroke="#b0963a" stroke-width="0.7"/><path d="M704 66 V59 H708.4" fill="none" stroke="#e4b030" stroke-width="1.4"/><path d="M710.8 59 l-2.8 -2.2 v4.4z" fill="#e4a828"/>
<path d="M748.2 69.6 L758.4 60.2" stroke="#5c6c8c" stroke-width="1.8"/><rect x="746.4" y="68" width="3.2" height="3.2" fill="#ecd880" stroke="#b0963a" stroke-width="0.7"/><rect x="757" y="58.6" width="3.2" height="3.2" fill="#ecd880" stroke="#b0963a" stroke-width="0.7"/><path d="M747.6 66 V59 H751.6" fill="none" stroke="#e4b030" stroke-width="1.4"/><path d="M754.0 59 l-2.8 -2.2 v4.4z" fill="#e4a828"/>
<path d="M724 59.4 H733.6 M731.8 58 V70.8 M732 62 L736.4 64.8 H740 M732 65.4 L736.4 68.2 H740" fill="none" stroke="#3f72cc" stroke-width="2.4"/>
<circle cx="775.2" cy="64.3" r="5.6" fill="#f2c412" stroke="#c89a0a" stroke-width="1"/><circle cx="775.2" cy="64.3" r="1.2" fill="#fff8e0"/>
<rect x="793.4" y="66" width="3.6" height="5.8" fill="#eab81a" stroke="#c09010" stroke-width="0.6"/><path d="M800 61.2 h5 M800 63.8 h5" stroke="#2f9e38" stroke-width="1.4"/>
<circle cx="795.2" cy="62.4" r="5.3" fill="#f2c412" stroke="#c89a0a" stroke-width="1"/><circle cx="795.2" cy="62.4" r="1.5" fill="#fffbe8"/>
<path d="M812.3 68.4 C810.6 58.4 823.6 54.6 825.6 65.2" fill="none" stroke="#847468" stroke-width="1.3"/><path d="M818.8 63.2 L813.6 69" stroke="#4a5068" stroke-width="1.2"/><path d="M812.8 69.8 l0.4 -2.8 l2.2 2z" fill="#4a5068"/>
<defs><linearGradient id="rf" x1="0" y1="0" x2="1" y2="1"><stop offset="0" stop-color="#8fbbe6"/><stop offset="1" stop-color="#cfe0f2"/></linearGradient></defs>
<rect x="833.6" y="58.6" width="14" height="10.6" fill="url(#rf)" stroke="#1e3564" stroke-width="1.3"/>
<path d="M855 68.4 V62.6 H860 V58.4 H868.6 V68.4Z" fill="#ecc050" stroke="#d4a030" stroke-width="0.6"/><path d="M855 64.6 H868.6 M855 66.6 H868.6 M860 60.4 H868.6 M860 62.6 H868.6 M857.6 62.6 V68.4 M860.2 58.4 V68.4 M863 58.4 V68.4 M865.8 58.4 V68.4" stroke="#f6dc90" stroke-width="0.5"/>
<text x="877.2" y="70.6" font-size="19" font-weight="bold" fill="#3c5ec4" textLength="14" lengthAdjust="spacingAndGlyphs" style="font-family:'Liberation Serif',serif">A</text>
<path d="M901.8 57.4 v13 M904.4 57.4 v13 M907 57.4 v13 M909.6 57.4 v13 M898.8 60.6 h13.6 M898.8 63 h13.6 M898.8 65.4 h13.6 M898.8 67.6 h13.6" stroke="#8a9098" stroke-width="0.9"/>
<rect x="900.2" y="58.8" width="10.8" height="10.2" rx="1" fill="#b4bcc6" stroke="#7c848e" stroke-width="0.9"/><rect x="902" y="60.6" width="7.2" height="6.6" fill="#c8d0da"/>
<rect x="1048.3" y="58.2" width="14.8" height="11.4" fill="#1f8a4a" stroke="#0e6030" stroke-width="0.8"/><rect x="1050" y="59.8" width="11.4" height="6.4" fill="#46a868"/><path d="M1051 60.6 l4 4.6 m0 -4.6 l-4 4.6 M1056.4 60.6 l4 4.6 m0 -4.6 l-4 4.6" stroke="#d8a040" stroke-width="0.9"/><path d="M1050 68 h11.4" stroke="#a8e0b8" stroke-width="0.9" stroke-dasharray="1.4 1.2"/>
<path d="M803.4 29.4 V40 H812.6 Z" fill="#7cc878" stroke="#2c9038" stroke-width="1.2" stroke-linejoin="round"/><path d="M805.4 34.6 V38 H808.4Z" fill="#e8f4e4"/>
<path d="M816.6 29.6 L806.4 38.6" stroke="#a87820" stroke-width="3.2" stroke-linecap="round"/><path d="M816.4 29.8 L806.8 38.2" stroke="#ecc050" stroke-width="1.8" stroke-linecap="round"/>
<rect x="804.6" y="40.8" width="13" height="2.6" fill="#ecc050" stroke="#b88a28" stroke-width="0.6"/>
<rect x="842" y="29.2" width="9" height="4" rx="0.8" fill="#f0a0a8" stroke="#d06070" stroke-width="0.8"/><rect x="842" y="37.6" width="9" height="4" rx="0.8" fill="#f0a0a8" stroke="#d06070" stroke-width="0.8"/><rect x="842" y="33.6" width="11.8" height="3.6" rx="0.8" fill="#9cc4ec" stroke="#5088c8" stroke-width="0.8"/><rect x="841.4" y="28.6" width="1.2" height="13.4" fill="#c05868"/>
<path d="M879.6 37.4 L881 30.2 Q881.2 28.8 882.6 28.8 H883.4 Q884.6 28.8 884.6 30.2 V37.4 Z M885.2 37.4 V30.2 Q885.2 28.8 886.4 28.8 H887.2 Q888.6 28.8 888.8 30.2 L890.2 37.4Z" fill="#8c929c" stroke="#5c626c" stroke-width="0.8"/><rect x="882" y="31.8" width="6" height="1.6" fill="#d0d4dc"/>
<circle cx="884" cy="41" r="1.5" fill="#d8d870" stroke="#8c9040" stroke-width="0.8"/><circle cx="891" cy="41" r="1.5" fill="#d8d870" stroke="#8c9040" stroke-width="0.8"/>
<path d="M918.8 30 V41.4 H930.4" fill="none" stroke="#4a7cc8" stroke-width="1.5"/><circle cx="918.8" cy="29.8" r="1.4" fill="#fff4d8" stroke="#d89030" stroke-width="0.8"/><circle cx="930.6" cy="41.4" r="1.4" fill="#fff4d8" stroke="#d89030" stroke-width="0.8"/>
<rect x="920.8" y="33.6" width="10.8" height="4" fill="#f0b860" stroke="#c88428" stroke-width="0.7"/><path d="M923 33.6 v2 M925.2 33.6 v2 M927.4 33.6 v2 M929.6 33.6 v2" stroke="#a06818" stroke-width="0.6"/>
<rect x="955.6" y="28.8" width="12.8" height="13" rx="1" fill="#9cc8e8" stroke="#4a88c0" stroke-width="1.2"/><path d="M955.6 33 H962 V29 M968.4 37 H962 V41.6 M958.6 37.4 h3.4 M962 33 h3.4" fill="none" stroke="#4a88c0" stroke-width="1.2"/>
<path d="M994.6 29 v13 M998 29 v13 M1001.4 29 v13 M1004.8 29 v13 M993 30.6 h13.4 M993 34 h13.4 M993 37.4 h13.4 M993 40.8 h13.4" stroke="#6674a0" stroke-width="1"/>
<path d="M825.1999999999999 32.6 h7.4 l-3.7 4.4z" fill="#111"/>
<path d="M862.8 32.6 h7.4 l-3.7 4.4z" fill="#111"/>
<path d="M900.6999999999999 32.6 h7.4 l-3.7 4.4z" fill="#111"/>
<path d="M938.5 32.6 h7.4 l-3.7 4.4z" fill="#111"/>
<path d="M976.6999999999999 32.6 h7.4 l-3.7 4.4z" fill="#111"/>
<path d="M1014.4 32.6 h7.4 l-3.7 4.4z" fill="#111"/>
<rect x="464.6" y="89.3" width="15.2" height="10.8" fill="#17864a" stroke="#0c6a38" stroke-width="0.6"/><rect x="474.4" y="90.6" width="4" height="4.4" fill="#d4ecd8"/><path d="M466.2 91.2 h3.4 M466.2 93.4 h3.4 M466.2 95.6 h3.4 M466.2 97.8 h3.4 M471.2 91 v7.6" stroke="#c8ecd0" stroke-width="0.9"/><path d="M472.6 99 h6.4" stroke="#e8fff0" stroke-width="1" stroke-dasharray="1 0.8"/>
<rect x="629" y="89.2" width="12" height="9.6" fill="#f4e6a0" stroke="#c8a850" stroke-width="0.9"/><rect x="629" y="89.2" width="12" height="2" fill="#d8b860"/><rect x="636" y="94.6" width="4" height="3.2" fill="#fffbe0" stroke="#c8a850" stroke-width="0.5"/>
<rect x="806" y="89.2" width="12" height="9.6" fill="#f4e6a0" stroke="#c8a850" stroke-width="0.9"/><rect x="806" y="89.2" width="12" height="2" fill="#d8b860"/><rect x="813" y="94.6" width="4" height="3.2" fill="#fffbe0" stroke="#c8a850" stroke-width="0.5"/>
<path d="M60 709.6 L66.4 702.4" stroke="#a0602c" stroke-width="3.2" stroke-linecap="round"/><path d="M60.2 709.4 L66.2 702.6" stroke="#e89a58" stroke-width="1.7" stroke-linecap="round"/><path d="M62.6 699.6 q3.6 -2.4 7.2 0.8 l-1.6 2 q-2.2 -1.6 -4.2 -0.6z" fill="#9aa0aa" stroke="#5c626c" stroke-width="0.7"/><path d="M67.6 706.4 h5 l-1.6 2 v2.6 h-1.8 v-2.6z" fill="#7c86a0"/>
<path d="M352.6 711 V700.6 h4.6 l1.2 1.4 h8.4 v9z" fill="#f0d890" stroke="#b89040" stroke-width="0.9"/><circle cx="360.6" cy="706.6" r="3.3" fill="#fafafa" stroke="#6a7080" stroke-width="1"/><path d="M360.6 704.6 v2.2 h1.6" fill="none" stroke="#4a5060" stroke-width="0.8"/>
<path d="M360 733.4 l2.1 4.5 l4.9 0.6 l-3.6 3.4 l0.9 4.9 l-4.3 -2.4 l-4.3 2.4 l0.9 -4.9 l-3.6 -3.4 l4.9 -0.6z" fill="#f6dc70" stroke="#d0a020" stroke-width="0.9" stroke-linejoin="round"/>
<text y="12.2" font-size="15.6" fill="#111"><tspan x="24" textLength="369.5" lengthAdjust="spacingAndGlyphs">Altium Designer (17.1) - C:\Users\baijj\Desktop\AD17-</tspan><tspan x="394.5" textLength="27.3" lengthAdjust="spacingAndGlyphs" font-size="14.2">四层</tspan><tspan x="421.8" textLength="15.4" lengthAdjust="spacingAndGlyphs">\A</tspan><tspan x="437.6" textLength="14.2" lengthAdjust="spacingAndGlyphs" font-size="14.2">盘</tspan><tspan x="452.6" textLength="5.4" lengthAdjust="spacingAndGlyphs">-</tspan><tspan x="459" textLength="56.5" lengthAdjust="spacingAndGlyphs" font-size="14.2">资料软件</tspan><tspan x="515.8" textLength="5.4" lengthAdjust="spacingAndGlyphs">\</tspan><tspan x="522" textLength="57" lengthAdjust="spacingAndGlyphs" font-size="14.2">工程文件</tspan><tspan x="579.3" textLength="5.4" lengthAdjust="spacingAndGlyphs">\</tspan><tspan x="584" textLength="432" lengthAdjust="spacingAndGlyphs">F407-4Layers.PcbDoc * - F407VGT6_Core.PrjPcb. Not signed in.</tspan></text>
<text x="28" y="41" font-size="15" fill="#111" textLength="28" lengthAdjust="spacingAndGlyphs" >D<tspan text-decoration="underline">X</tspan>P</text>
<text x="67.8" y="41" font-size="15" fill="#111" textLength="48.2" lengthAdjust="spacingAndGlyphs" >文件 (<tspan text-decoration="underline">F</tspan>)</text>
<text x="132.4" y="41" font-size="15" fill="#111" textLength="47.8" lengthAdjust="spacingAndGlyphs" >编辑 (<tspan text-decoration="underline">E</tspan>)</text>
<text x="196.7" y="41" font-size="15" fill="#111" textLength="49.5" lengthAdjust="spacingAndGlyphs" >视图 (<tspan text-decoration="underline">V</tspan>)</text>
<text x="262.6" y="41" font-size="15" fill="#111" textLength="49.7" lengthAdjust="spacingAndGlyphs" >工程 (<tspan text-decoration="underline">C</tspan>)</text>
<text x="328.6" y="41" font-size="15" fill="#111" textLength="49" lengthAdjust="spacingAndGlyphs" >放置 (<tspan text-decoration="underline">P</tspan>)</text>
<text x="394.4" y="41" font-size="15" fill="#111" textLength="51" lengthAdjust="spacingAndGlyphs" >设计 (<tspan text-decoration="underline">D</tspan>)</text>
<text x="461.7" y="41" font-size="15" fill="#111" textLength="49" lengthAdjust="spacingAndGlyphs" >工具 (<tspan text-decoration="underline">T</tspan>)</text>
<text x="526.3" y="41" font-size="15" fill="#111" textLength="51.5" lengthAdjust="spacingAndGlyphs" >布线 (<tspan text-decoration="underline">U</tspan>)</text>
<text x="593.6" y="41" font-size="15" fill="#111" textLength="50.3" lengthAdjust="spacingAndGlyphs" >报告 (<tspan text-decoration="underline">R</tspan>)</text>
<text x="659.7" y="41" font-size="15" fill="#111" textLength="55.8" lengthAdjust="spacingAndGlyphs" >窗口 (<tspan text-decoration="underline">W</tspan>)</text>
<text x="731" y="41" font-size="15" fill="#111" textLength="52.2" lengthAdjust="spacingAndGlyphs" >帮助 (<tspan text-decoration="underline">H</tspan>)</text>
<svg x="528" y="52" width="124.5" height="24" viewBox="528 52 124.5 24"><text x="531" y="68.7" font-size="16" fill="#111" textLength="135.5" lengthAdjust="spacingAndGlyphs" >Altium Standard 2D</text></svg>
<svg x="929" y="52" width="100" height="24" viewBox="929 52 100 24"><text x="932" y="68.5" font-size="16" fill="#111" textLength="101.5" lengthAdjust="spacingAndGlyphs" >[No Variations]</text></svg>
<path d="M657.5 62 h7 l-3.5 4.5z M1034 62 h7 l-3.5 4.5z" fill="#111"/>
<text x="484.3" y="99.7" font-size="13.5" fill="#111" textLength="133.2" lengthAdjust="spacingAndGlyphs" >F407-4Layers.PcbDoc *</text>
<text x="646.4" y="99.7" font-size="13.5" fill="#ededed" textLength="149" lengthAdjust="spacingAndGlyphs" >STM32F407_Core.SchDoc</text>
<text x="824.2" y="99.7" font-size="13.5" fill="#ededed" textLength="158.3" lengthAdjust="spacingAndGlyphs" >STM32F407_Device.SchDoc</text>
<text x="7" y="99" font-size="14.5" fill="#0a0a14" textLength="64" lengthAdjust="spacingAndGlyphs" font-weight="bold" >PCB Filter</text>
<path d="M403 92 h7.6 l-3.8 4.8z" fill="#111"/>
<path d="M423.2 90.2 h4.6 v4 h1.2 v1.3 h-3 v2.8 h-1 v-2.8 h-3 v-1.3 h1.2z" fill="#111"/><rect x="424.3" y="91.2" width="1.2" height="3" fill="#9fbedb"/>
<path d="M441.6 91.4 l5.8 5.8 M447.4 91.4 l-5.8 5.8" stroke="#111" stroke-width="1.9" fill="none"/>
<text x="14" y="134.5" font-size="13.5" fill="#111" textLength="80" lengthAdjust="spacingAndGlyphs" >选择高亮对象</text>
<text x="14" y="157.6" font-size="13.5" fill="#111" textLength="26.5" lengthAdjust="spacingAndGlyphs" >对象</text>
<text x="41" y="156" font-size="10" fill="#333" textLength="7" lengthAdjust="spacingAndGlyphs" >#</text>
<text x="256.8" y="157" font-size="13.5" fill="#111" textLength="20" lengthAdjust="spacingAndGlyphs" >Net</text>
<text x="306" y="157" font-size="13.5" fill="#111" textLength="65" lengthAdjust="spacingAndGlyphs" >Compone...</text>
<text x="399" y="157" font-size="13.5" fill="#111" textLength="24" lengthAdjust="spacingAndGlyphs" >Free</text>
<text x="13" y="179.3" font-size="13.8" fill="#111" textLength="69" lengthAdjust="spacingAndGlyphs" >Component</text>
<text x="13" y="201.10000000000002" font-size="13.8" fill="#111" textLength="103" lengthAdjust="spacingAndGlyphs" >Component Body</text>
<text x="13" y="222.9" font-size="13.8" fill="#111" textLength="34" lengthAdjust="spacingAndGlyphs" >Room</text>
<text x="13" y="244.70000000000002" font-size="13.8" fill="#111" textLength="46.5" lengthAdjust="spacingAndGlyphs" >Polygon</text>
<text x="13" y="266.5" font-size="13.8" fill="#111" textLength="22.5" lengthAdjust="spacingAndGlyphs" >Text</text>
<text x="13" y="288.3" font-size="13.8" fill="#111" textLength="30" lengthAdjust="spacingAndGlyphs" >Track</text>
<text x="13" y="310.1" font-size="13.8" fill="#111" textLength="19.5" lengthAdjust="spacingAndGlyphs" >Arc</text>
<text x="13" y="331.9" font-size="13.8" fill="#111" textLength="17.5" lengthAdjust="spacingAndGlyphs" >Via</text>
<text x="13" y="353.70000000000005" font-size="13.8" fill="#111" textLength="21.5" lengthAdjust="spacingAndGlyphs" >Pad</text>
<text x="13" y="375.5" font-size="13.8" fill="#111" textLength="15" lengthAdjust="spacingAndGlyphs" >Fill</text>
<text x="13" y="397.3" font-size="13.8" fill="#111" textLength="39.5" lengthAdjust="spacingAndGlyphs" >Region</text>
<text x="14" y="426" font-size="13.5" fill="#111" textLength="13.5" lengthAdjust="spacingAndGlyphs" >层</text>
<text x="52.5" y="448.3" font-size="13.8" fill="#111" textLength="70.5" lengthAdjust="spacingAndGlyphs" >&lt;All Layers&gt;</text>
<text x="52.5" y="470.1" font-size="13.8" fill="#111" textLength="125.5" lengthAdjust="spacingAndGlyphs" >&lt;Component Layers&gt;</text>
<text x="52.5" y="491.90000000000003" font-size="13.8" fill="#111" textLength="105.2" lengthAdjust="spacingAndGlyphs" >&lt;Electrical Layers&gt;</text>
<text x="52.5" y="513.7" font-size="13.8" fill="#111" textLength="90.5" lengthAdjust="spacingAndGlyphs" >&lt;Signal Layers&gt;</text>
<text x="51.3" y="535.5" font-size="13.8" fill="#111" textLength="56" lengthAdjust="spacingAndGlyphs" >Top Paste</text>
<path d="M432.5 422.5 l4.5 -4.5 l4.5 4.5 M432.5 526.5 l4.5 4.5 l4.5 -4.5" stroke="#444" stroke-width="1.6" fill="none"/>
<text x="13" y="561" font-size="13.5" fill="#111" textLength="27" lengthAdjust="spacingAndGlyphs" >过滤</text>
<text x="16.6" y="580" font-size="17.5" fill="#222" textLength="41.5" lengthAdjust="spacingAndGlyphs" style="font-family:'Liberation Mono',monospace">IsText</text>
<text x="78" y="709.5" font-size="13.5" fill="#111" textLength="27" lengthAdjust="spacingAndGlyphs" >帮助</text>
<text x="208" y="709.5" font-size="13.5" fill="#111" textLength="40.5" lengthAdjust="spacingAndGlyphs" >生成器</text>
<text x="372" y="709.5" font-size="13.5" fill="#111" textLength="27" lengthAdjust="spacingAndGlyphs" >历史</text>
<text x="48" y="744.5" font-size="13.5" fill="#111" textLength="67" lengthAdjust="spacingAndGlyphs" >添加到喜好</text>
<text x="201.5" y="744.5" font-size="13.5" fill="#111" textLength="53.5" lengthAdjust="spacingAndGlyphs" >创建规则</text>
<text x="372" y="744.5" font-size="13.5" fill="#111" textLength="27" lengthAdjust="spacingAndGlyphs" >喜好</text>
<text x="31.6" y="778.5" font-size="13.5" fill="#111" textLength="26.5" lengthAdjust="spacingAndGlyphs" >匹配</text>
<text x="330.8" y="778.5" font-size="13.5" fill="#111" textLength="40.2" lengthAdjust="spacingAndGlyphs" >不匹配</text>
<text x="49" y="806" font-size="13.5" fill="#111" textLength="27" lengthAdjust="spacingAndGlyphs" >选择</text>
<text x="349" y="806" font-size="13.5" fill="#111" textLength="53" lengthAdjust="spacingAndGlyphs" >取消选择</text>
<path d="M334 800 l3 3.2 l5.2 -6.4" stroke="#111" stroke-width="1.3" fill="none"/>
<path d="M0.5 81 C0.5 80.3 -0.8 77.8 0.5 77 C1.8 76.2 3.9 76.2 8 76 C12.1 75.8 18.8 75.5 25 75.5 C31.2 75.5 39.2 75.5 45 76 C50.8 76.5 55.0 77.3 60 78.5 C65.0 79.7 70.8 81.3 75 83 C79.2 84.7 82.9 86.5 85 88.5 C87.1 90.5 87.3 92.6 87.5 95 C87.7 97.4 86.9 100.2 86 103 C85.1 105.8 83.5 109.2 82 112 C80.5 114.8 79.0 117.9 77 120 C75.0 122.1 72.8 123.8 70 124.5 C67.2 125.2 63.3 124.9 60 124.5 C56.7 124.1 54.2 123.5 50 122 C45.8 120.5 39.2 117.8 35 115.5 C30.8 113.2 27.8 110.6 25 108 C22.2 105.4 19.7 101.9 18 100 C16.3 98.1 15.5 97.1 15 96.5" fill="none" stroke="#ea1a1c" stroke-width="3.4" stroke-linecap="round" stroke-linejoin="round"/>
<path d="M24.7 606.3 C22.2 604.7 13.3 600.5 9.5 596.8 C5.7 593.1 3.1 590.4 1.8 584 C0.5 577.6 1.5 566.8 1.5 558.6 C1.5 550.4 1.5 540.6 2 534.8 C2.5 529.0 2.5 527.3 4.8 523.6 C7.1 519.9 11.5 515.5 16 512.5 C20.5 509.4 26.5 506.6 31.8 505.3 C37.1 504.0 41.9 504.2 47.7 504.5 C53.5 504.8 60.7 505.4 66.8 507 C72.9 508.6 79.0 511.2 84.3 514 C89.6 516.8 94.6 519.4 98.6 523.6 C102.5 527.9 105.3 533.7 108 539.5 C110.7 545.3 112.8 552.2 114.5 558.6 C116.2 565.0 117.8 571.3 118.5 577.7 C119.2 584.1 119.7 591.8 118.5 596.8 C117.3 601.8 115.1 605.2 111.3 608 C107.5 610.8 101.2 611.9 95.4 613.5 C89.6 615.1 84.2 617.0 76.3 617.5 C68.3 618.0 56.4 617.2 47.7 616.7 C39.0 616.2 30.1 614.6 23.9 614.3 C17.7 613.9 12.6 614.5 10.3 614.6" fill="none" stroke="#ea1a1c" stroke-width="3.4" stroke-linecap="round" stroke-linejoin="round"/>
</svg>
</body></html>
